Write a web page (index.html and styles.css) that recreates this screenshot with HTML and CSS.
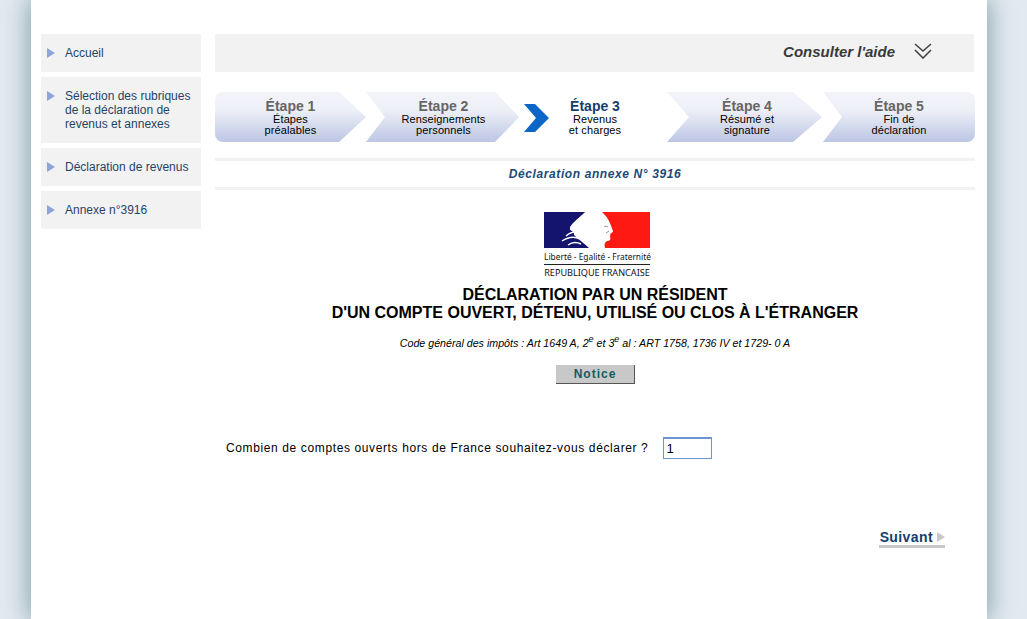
FILE: index.html
```html
<!DOCTYPE html>
<html lang="fr">
<head>
    <meta charset="UTF-8">
    <title>Déclaration annexe N° 3916</title>
    <link rel="stylesheet" href="styles.css">
</head>
<body>
    <div class="page">
        <!-- menu de gauche -->
        <ul class="side-menu">
            <li><span class="side-arrow"></span><a href="#">Accueil</a></li>
            <li><span class="side-arrow"></span><a href="#">Sélection des rubriques de la déclaration de revenus et annexes</a></li>
            <li><span class="side-arrow"></span><a href="#">Déclaration de revenus</a></li>
            <li><span class="side-arrow"></span><a href="#">Annexe n°3916</a></li>
        </ul>

        <div class="main">
            <div class="help-bar">
                <span class="help-text">Consulter l'aide</span>
                <svg class="help-icon" width="18" height="16" viewBox="0 0 18 16">
                    <polyline points="1,1 9,8 17,1" fill="none" stroke="#444" stroke-width="1.6"/>
                    <polyline points="1,7 9,15 17,7" fill="none" stroke="#444" stroke-width="1.6"/>
                </svg>
            </div>

            <div class="steps">
                <div class="step step-1"><b>Étape 1</b><span>Étapes<br>préalables</span></div>
                <div class="step step-2"><b>Étape 2</b><span>Renseignements<br>personnels</span></div>
                <div class="step step-3">
                    <svg class="step-arrow" width="25" height="28" viewBox="0 0 25 28">
                        <polygon points="0,0 11,0 25,14 11,28 0,28 12,14" fill="#0b66c8"/>
                    </svg>
                    <b>Étape 3</b><span>Revenus<br>et charges</span>
                </div>
                <div class="step step-4"><b>Étape 4</b><span>Résumé et<br>signature</span></div>
                <div class="step step-5"><b>Étape 5</b><span>Fin de<br>déclaration</span></div>
            </div>

            <div class="section-title">Déclaration annexe N° 3916</div>

            <div class="logo">
                <svg class="logo-flag" width="106" height="36" viewBox="0 0 106 36">
                    <rect width="106" height="36" fill="#fff"/>
                    <path d="M0 0H41C36 5 29 10 26 15C25 19 31 19 30 23C34 27 40 31 45 36H0Z" fill="#14146e"/>
                    <path d="M58 0H106V36H61C60 32 61 30 63 29C66 29 67 27 66 25C66 24 67 23 66 22C68 21 69 20 69 19C67 15 66 7 58 0Z" fill="#fe1a12"/>
                    <path d="M22 24C27 20 31 19 35 21M18 29C24 25 30 24 36 27M26 17C29 19 32 19 34 18M24 33C28 30 33 30 37 32" fill="none" stroke="#fff" stroke-width="1.4"/>
                    <path d="M60 15C61 14 63 14 64 15M62 21L65 19" fill="none" stroke="#999" stroke-width="1"/>
                </svg>
                <div class="logo-motto">Liberté - Egalité - Fraternité</div>
                <div class="logo-name">REPUBLIQUE FRANCAISE</div>
            </div>

            <h1 class="doc-title">DÉCLARATION PAR UN RÉSIDENT<br>D'UN COMPTE OUVERT, DÉTENU, UTILISÉ OU CLOS À L'ÉTRANGER</h1>
            <p class="doc-ref">Code général des impôts : Art 1649 A, 2<sup>e</sup> et 3<sup>e</sup> al : ART 1758, 1736 IV et 1729- 0 A</p>

            <div class="notice-row"><a class="notice-btn" href="#">Notice</a></div>

            <div class="question">
                <label for="nb-comptes">Combien de comptes ouverts hors de France souhaitez-vous déclarer ?</label>
                <input id="nb-comptes" type="text" value="1">
            </div>

            <div class="next-row">
                <a class="next-link" href="#">Suivant<span class="next-arrow"></span></a>
            </div>
        </div>
    </div>
</body>
</html>
```

FILE: styles.css
```css
html, body {
    height: 100%;
}

body {
    margin: 0;
    padding: 0;
    overflow: hidden;
    background-color: #e2eaf0;
    font-family: 'Liberation Sans', Arial, sans-serif;
    color: #000;
}

.page {
    display: flex;
    box-sizing: border-box;
    width: 956px;
    height: 100%;
    margin-left: 31px;
    padding: 34px 12px 0 10px;
    background-color: #fff;
    box-shadow: 0 0 24px 2px #84a0aa;
}

/* menu de gauche */
.side-menu {
    flex: none;
    width: 160px;
    margin: 0 14px 0 0;
    padding: 0;
    list-style: none;
}

.side-menu li {
    display: flex;
    align-items: flex-start;
    box-sizing: border-box;
    min-height: 38px;
    margin-bottom: 5px;
    padding: 12px 8px 12px 6px;
    background-color: #f2f2f2;
    font-size: 12px;
    line-height: 14px;
}

.side-menu a {
    color: #1f4468;
    text-decoration: none;
}

.side-arrow {
    flex: none;
    width: 0;
    height: 0;
    margin: 2px 10px 0 0;
    border-left: 8px solid #8fa5d8;
    border-top: 5px solid transparent;
    border-bottom: 5px solid transparent;
}

.main {
    flex: none;
    width: 760px;
}

.help-bar {
    display: flex;
    justify-content: flex-end;
    align-items: center;
    box-sizing: border-box;
    width: 759px;
    height: 38px;
    padding-right: 42px;
    background-color: #f2f2f2;
}

.help-text {
    margin-top: -4px;
    font-size: 15px;
    font-weight: bold;
    font-style: italic;
    color: #3a3a3a;
}

.help-icon {
    margin-left: 19px;
    margin-top: -5px;
}

/* etapes */
.steps {
    display: flex;
    height: 50px;
    margin-top: 20px;
}

.step {
    position: relative;
    box-sizing: border-box;
    height: 50px;
    padding-top: 6px;
    text-align: center;
    background: linear-gradient(#f3f4fa 0%, #eef0f8 35%, #bcc6e4 100%);
}

.step b {
    display: block;
    font-size: 14px;
    line-height: 16px;
    color: #666;
}

.step span {
    display: block;
    font-size: 11px;
    line-height: 11px;
    letter-spacing: 0.1px;
    color: #000;
}

.step-1 {
    width: 151px;
    border-radius: 8px 0 0 8px;
    clip-path: polygon(0 0, 124px 0, 151px 25px, 124px 50px, 0 50px);
}

.step-2 {
    width: 153px;
    padding-left: 2px;
    clip-path: polygon(0 0, 129px 0, 153px 25px, 129px 50px, 0 50px, 19px 25px);
}

.step-3 {
    width: 148px;
    padding-left: 4px;
    background: none;
}

.step-3 b {
    color: #143f6d;
}

.step-arrow {
    position: absolute;
    left: 5px;
    top: 12px;
}

.step-4 {
    width: 155px;
    padding-left: 5px;
    clip-path: polygon(0 0, 126px 0, 155px 25px, 126px 50px, 0 50px, 22px 25px);
}

.step-5 {
    width: 152px;
    margin-left: 1px;
    border-radius: 0 8px 8px 0;
    clip-path: polygon(0 0, 152px 0, 152px 50px, 0 50px, 19px 25px);
}

.section-title {
    box-sizing: border-box;
    height: 32px;
    margin-top: 16px;
    border-top: 3px solid #f2f2f2;
    border-bottom: 3px solid #f2f2f2;
    text-align: center;
    font-size: 12px;
    line-height: 26px;
    font-weight: bold;
    font-style: italic;
    letter-spacing: 0.6px;
    color: #1c4a78;
}

/* logo */
.logo {
    width: 106px;
    margin: 22px 0 0 329px;
    color: #111;
    font-family: 'Noto Sans', 'Liberation Sans', sans-serif;
}

.logo-flag {
    display: block;
}

.logo-motto {
    margin-top: 3px;
    padding-bottom: 2px;
    border-bottom: 1px solid #222;
    font-size: 8.4px;
    line-height: 11px;
    white-space: nowrap;
    text-align: center;
}

.logo-name {
    margin-top: 2px;
    font-size: 9.1px;
    line-height: 12px;
    white-space: nowrap;
    text-align: center;
}

.doc-title {
    margin: 7px 0 0;
    text-align: center;
    font-size: 16px;
    line-height: 18px;
    font-weight: bold;
}

.doc-ref {
    margin: 14px 0 0;
    text-align: center;
    font-size: 10.67px;
    line-height: 14px;
    font-style: italic;
}

.doc-ref sup {
    font-size: 9px;
    line-height: 0;
}

.notice-row {
    margin-top: 14px;
    text-align: center;
}

.notice-btn {
    display: inline-block;
    box-sizing: border-box;
    width: 79px;
    height: 19px;
    padding-left: 1px;
    border-right: 1px solid #555;
    border-bottom: 1px solid #555;
    background-color: #c8c8c8;
    color: #0f5f5f;
    font-size: 12px;
    line-height: 18px;
    font-weight: bold;
    letter-spacing: 1px;
    text-decoration: none;
}

.question {
    display: flex;
    align-items: center;
    margin-top: 53px;
    padding-left: 11px;
    font-size: 12px;
    letter-spacing: 0.62px;
}

.question input {
    box-sizing: border-box;
    width: 49px;
    height: 22px;
    margin-left: 15px;
    padding: 0 2px;
    border: 1px solid #6f94d0;
    border-top-width: 2px;
    font-family: 'Liberation Sans', Arial, sans-serif;
    font-size: 13px;
    color: #000;
}

.next-row {
    display: flex;
    justify-content: flex-end;
    margin-top: 70px;
    padding-right: 30px;
}

.next-link {
    display: flex;
    align-items: center;
    padding: 0 0 0 1px;
    border-bottom: 3px solid #c8c8c8;
    font-size: 14px;
    line-height: 16px;
    font-weight: bold;
    letter-spacing: 0.4px;
    color: #143f6d;
    text-decoration: none;
}

.next-arrow {
    width: 0;
    height: 0;
    margin-left: 4px;
    border-left: 8px solid #c8c8c8;
    border-top: 5px solid transparent;
    border-bottom: 5px solid transparent;
}
```
